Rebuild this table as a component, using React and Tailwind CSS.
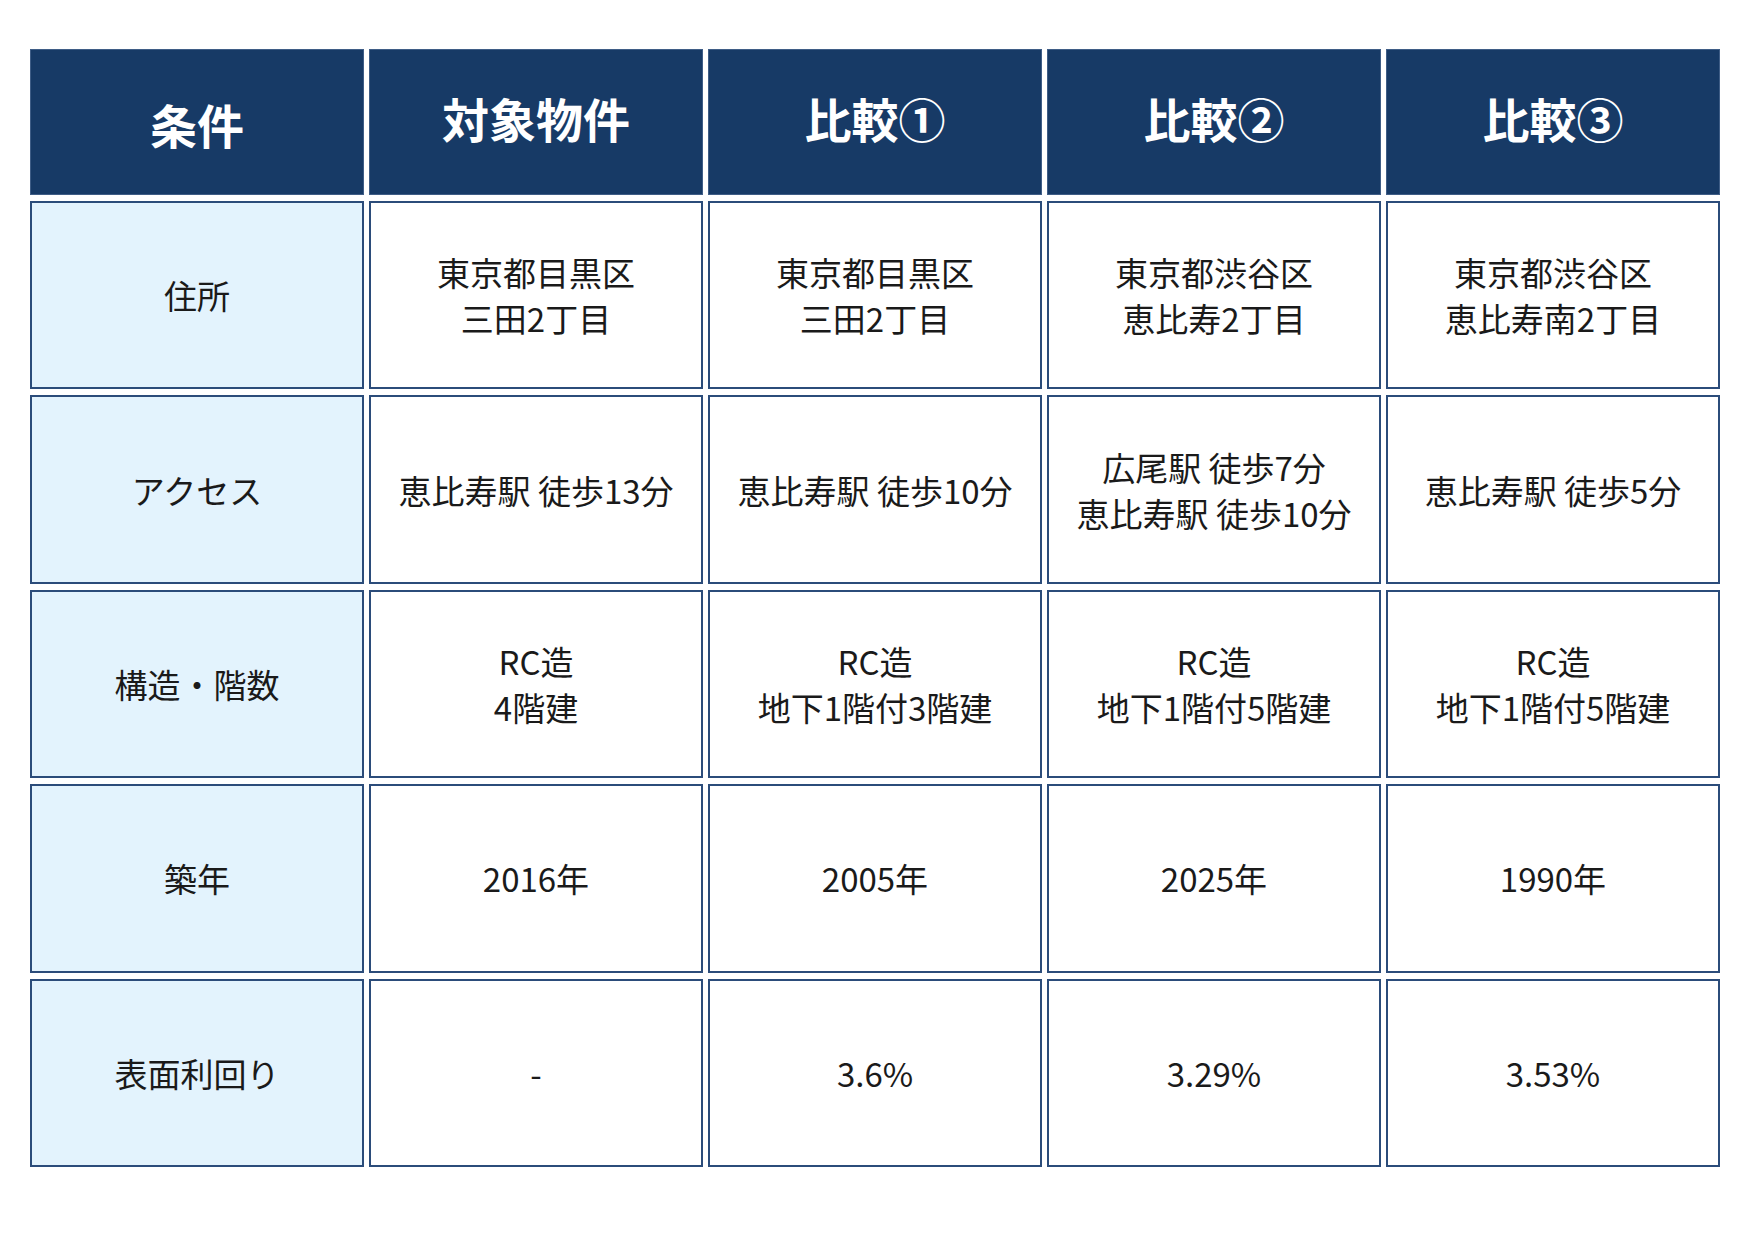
import React from "react";

const headers = ["条件", "対象物件", "比較①", "比較②", "比較③"];
const rows = [
  ["住所", ["東京都目黒区", "三田2丁目"], ["東京都目黒区", "三田2丁目"], ["東京都渋谷区", "恵比寿2丁目"], ["東京都渋谷区", "恵比寿南2丁目"]],
  ["アクセス", ["恵比寿駅 徒歩13分"], ["恵比寿駅 徒歩10分"], ["広尾駅 徒歩7分", "恵比寿駅 徒歩10分"], ["恵比寿駅 徒歩5分"]],
  ["構造・階数", ["RC造", "4階建"], ["RC造", "地下1階付3階建"], ["RC造", "地下1階付5階建"], ["RC造", "地下1階付5階建"]],
  ["築年", ["2016年"], ["2005年"], ["2025年"], ["1990年"]],
  ["表面利回り", ["-"], ["3.6%"], ["3.29%"], ["3.53%"]],
];

const font = { fontFamily: '"Noto Sans CJK JP", "Noto Sans", sans-serif' };

export default function App() {
  return (
    <div className="w-[1750px] h-[1250px] bg-white pt-[49px] pl-[30px]" style={font}>
      <div className="grid grid-cols-[repeat(5,334px)] grid-rows-[146px_repeat(5,188.4px)] gap-x-[5px] gap-y-[6px]">
        {headers.map((h, i) => (
          <div
            key={h}
            className={
              i === 0
                ? "bg-[#173a66] border border-[#3f5d86] flex items-center justify-center text-white font-bold text-[47px] leading-none pt-[2px]"
                : "bg-[#173a66] border border-[#3f5d86] flex items-center justify-center text-white font-bold text-[47px] leading-none pb-[10px]"
            }
          >
            {h}
          </div>
        ))}
        {rows.map((r, i) => (
          <React.Fragment key={i}>
            <div className="bg-[#e3f3fd] border-2 border-[#2b4c7a] flex items-center justify-center text-[#1a1a1a] text-[33px] leading-[46px]">
              {r[0]}
            </div>
            {r.slice(1).map((lines, j) => (
              <div
                key={j}
                className="bg-white border-2 border-[#2b4c7a] flex flex-col items-center justify-center text-[#1a1a1a] text-[33px] leading-[46px] text-center"
              >
                {lines.map((l, k) => (
                  <div key={k}>{l}</div>
                ))}
              </div>
            ))}
          </React.Fragment>
        ))}
      </div>
    </div>
  );
}
